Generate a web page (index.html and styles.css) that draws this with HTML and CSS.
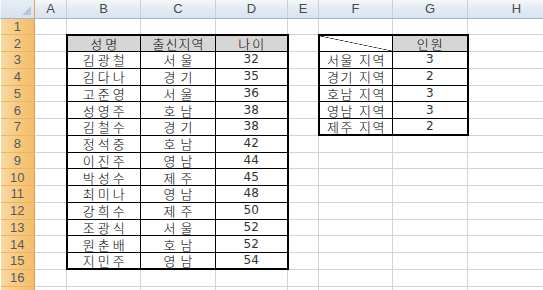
FILE: index.html
```html
<!DOCTYPE html>
<html lang="ko">
<head>
<meta charset="utf-8">
<link rel="stylesheet" href="styles.css">
</head>
<body>
<table class="sheet">
<colgroup>
<col class="w-rh"><col class="w-a"><col class="w-b"><col class="w-c"><col class="w-d"><col class="w-e"><col class="w-f"><col class="w-g"><col class="w-h">
</colgroup>
<tr class="colhead">
<th class="corner"><span class="tri"></span></th><th>A</th><th>B</th><th>C</th><th>D</th><th>E</th><th>F</th><th>G</th><th>H</th>
</tr>
<tr><th class="rh">1</th><td></td><td></td><td></td><td></td><td></td><td></td><td></td><td></td></tr>
<tr><th class="rh">2</th><td></td>
<td class="t hd top lft ko">성명</td><td class="t hd top ko tight">출신지역</td><td class="t hd top rgt ko sp2">나이</td>
<td></td>
<td class="t top lft diag"></td><td class="t hd top rgt ko sp2">인원</td><td></td></tr>
<tr><th class="rh">3</th><td></td><td class="t lft ko">김광철</td><td class="t ko wide">서울</td><td class="t rgt num">32</td><td></td><td class="t lft ko sp1">서울 지역</td><td class="t rgt num">3</td><td></td></tr>
<tr><th class="rh">4</th><td></td><td class="t lft ko">김다나</td><td class="t ko wide">경기</td><td class="t rgt num">35</td><td></td><td class="t lft ko sp1">경기 지역</td><td class="t rgt num">2</td><td></td></tr>
<tr><th class="rh">5</th><td></td><td class="t lft ko">고준영</td><td class="t ko wide">서울</td><td class="t rgt num">36</td><td></td><td class="t lft ko sp1">호남 지역</td><td class="t rgt num">3</td><td></td></tr>
<tr><th class="rh">6</th><td></td><td class="t lft ko">성영주</td><td class="t ko wide">호남</td><td class="t rgt num">38</td><td></td><td class="t lft ko sp1">영남 지역</td><td class="t rgt num">3</td><td></td></tr>
<tr><th class="rh">7</th><td></td><td class="t lft ko">김철수</td><td class="t ko wide">경기</td><td class="t rgt num">38</td><td></td><td class="t lft bot ko sp1">제주 지역</td><td class="t rgt bot num">2</td><td></td></tr>
<tr><th class="rh">8</th><td></td><td class="t lft ko">정석중</td><td class="t ko wide">호남</td><td class="t rgt num">42</td><td></td><td></td><td></td><td></td></tr>
<tr><th class="rh">9</th><td></td><td class="t lft ko">이진주</td><td class="t ko wide">영남</td><td class="t rgt num">44</td><td></td><td></td><td></td><td></td></tr>
<tr><th class="rh">10</th><td></td><td class="t lft ko">박성수</td><td class="t ko wide">제주</td><td class="t rgt num">45</td><td></td><td></td><td></td><td></td></tr>
<tr><th class="rh">11</th><td></td><td class="t lft ko">최미나</td><td class="t ko wide">영남</td><td class="t rgt num">48</td><td></td><td></td><td></td><td></td></tr>
<tr><th class="rh">12</th><td></td><td class="t lft ko">강희수</td><td class="t ko wide">제주</td><td class="t rgt num">50</td><td></td><td></td><td></td><td></td></tr>
<tr><th class="rh">13</th><td></td><td class="t lft ko">조광식</td><td class="t ko wide">서울</td><td class="t rgt num">52</td><td></td><td></td><td></td><td></td></tr>
<tr><th class="rh">14</th><td></td><td class="t lft ko">원춘배</td><td class="t ko wide">호남</td><td class="t rgt num">52</td><td></td><td></td><td></td><td></td></tr>
<tr><th class="rh">15</th><td></td><td class="t lft bot ko">지민주</td><td class="t bot ko wide">영남</td><td class="t rgt bot num">54</td><td></td><td></td><td></td><td></td></tr>
<tr><th class="rh">16</th><td></td><td></td><td></td><td></td><td></td><td></td><td></td><td></td></tr>
<tr><th class="rh"></th><td></td><td></td><td></td><td></td><td></td><td></td><td></td><td></td></tr>
</table>
</body>
</html>
```

FILE: styles.css
```css
html, body {
  margin: 0;
  padding: 0;
  background: #ffffff;
  overflow: hidden;
}

.sheet {
  border-collapse: collapse;
  table-layout: fixed;
  width: 565px;
  font-family: "Noto Sans CJK KR", "Noto Sans", sans-serif;
  font-size: 13px;
  font-weight: 300;
  color: #000;
}

.w-rh { width: 34px; }
.w-a { width: 32px; }
.w-b { width: 74px; }
.w-c { width: 75px; }
.w-d { width: 72px; }
.w-e { width: 31px; }
.w-f { width: 74px; }
.w-g { width: 75px; }
.w-h { width: 98px; }

.sheet tr { height: 16.75px; }
.sheet td {
  border: 1px solid #d3d3d3;
  padding: 0;
  line-height: 13px;
  text-align: center;
  white-space: nowrap;
}

.sheet tr.colhead { height: 18px; }
.colhead th {
  padding: 0;
  line-height: 14px;
  font-family: "Liberation Sans", "DejaVu Sans", sans-serif;
  font-weight: normal;
  font-size: 13px;
  color: #4a4a4a;
  background: linear-gradient(#f4f7fb, #e2e9f3 55%, #d9e3ef);
  border-left: 1px solid #f2f5fa;
  border-right: 1px solid #c5d1df;
  border-bottom: 1px solid #9eb6ce;
  text-align: center;
}

.colhead .corner {
  position: relative;
  background: linear-gradient(#e8eef6, #d6e0ec);
  border-right: 1px solid #e7a64a;
}
.tri {
  position: absolute;
  right: 3px;
  bottom: 3px;
  width: 0;
  height: 0;
  border-left: 9px solid transparent;
  border-bottom: 9px solid #b8c6d8;
}

.rh {
  padding: 0;
  font-family: "Liberation Sans", "DejaVu Sans", sans-serif;
  font-weight: normal;
  font-size: 13px;
  color: #5a5a5a;
  background: linear-gradient(90deg, #f9d8a0, #f6c67a 60%, #f3bd6b);
  border-top: 1px solid #fae2b8;
  border-bottom: 1px solid #eab56a;
  border-right: 1px solid #e1a04a;
  text-align: center;
  line-height: 13px;
}

.sheet td.t { border: 1px solid #000; }
.sheet td.top { border-top: 2px solid #000; }
.sheet td.bot { border-bottom: 2px solid #000; }
.sheet td.lft { border-left: 2px solid #000; }
.sheet td.rgt { border-right: 2px solid #000; }

.hd { background: #d6d6d6; }

.ko { letter-spacing: 3px; text-indent: 3px; }
.ko.tight { letter-spacing: 1px; text-indent: 1px; }
.ko.wide { letter-spacing: 5px; text-indent: 5px; }
.ko.sp2 { letter-spacing: 2px; text-indent: 2px; }
.ko.sp1 { letter-spacing: 1.5px; text-indent: 1.5px; }

.num {
  font-family: "DejaVu Sans", sans-serif;
  font-weight: normal;
  font-size: 12px;
  color: #333;
}

.diag {
  background: linear-gradient(to top right, transparent calc(50% - 0.6px), #222 50%, transparent calc(50% + 0.6px));
}
```
